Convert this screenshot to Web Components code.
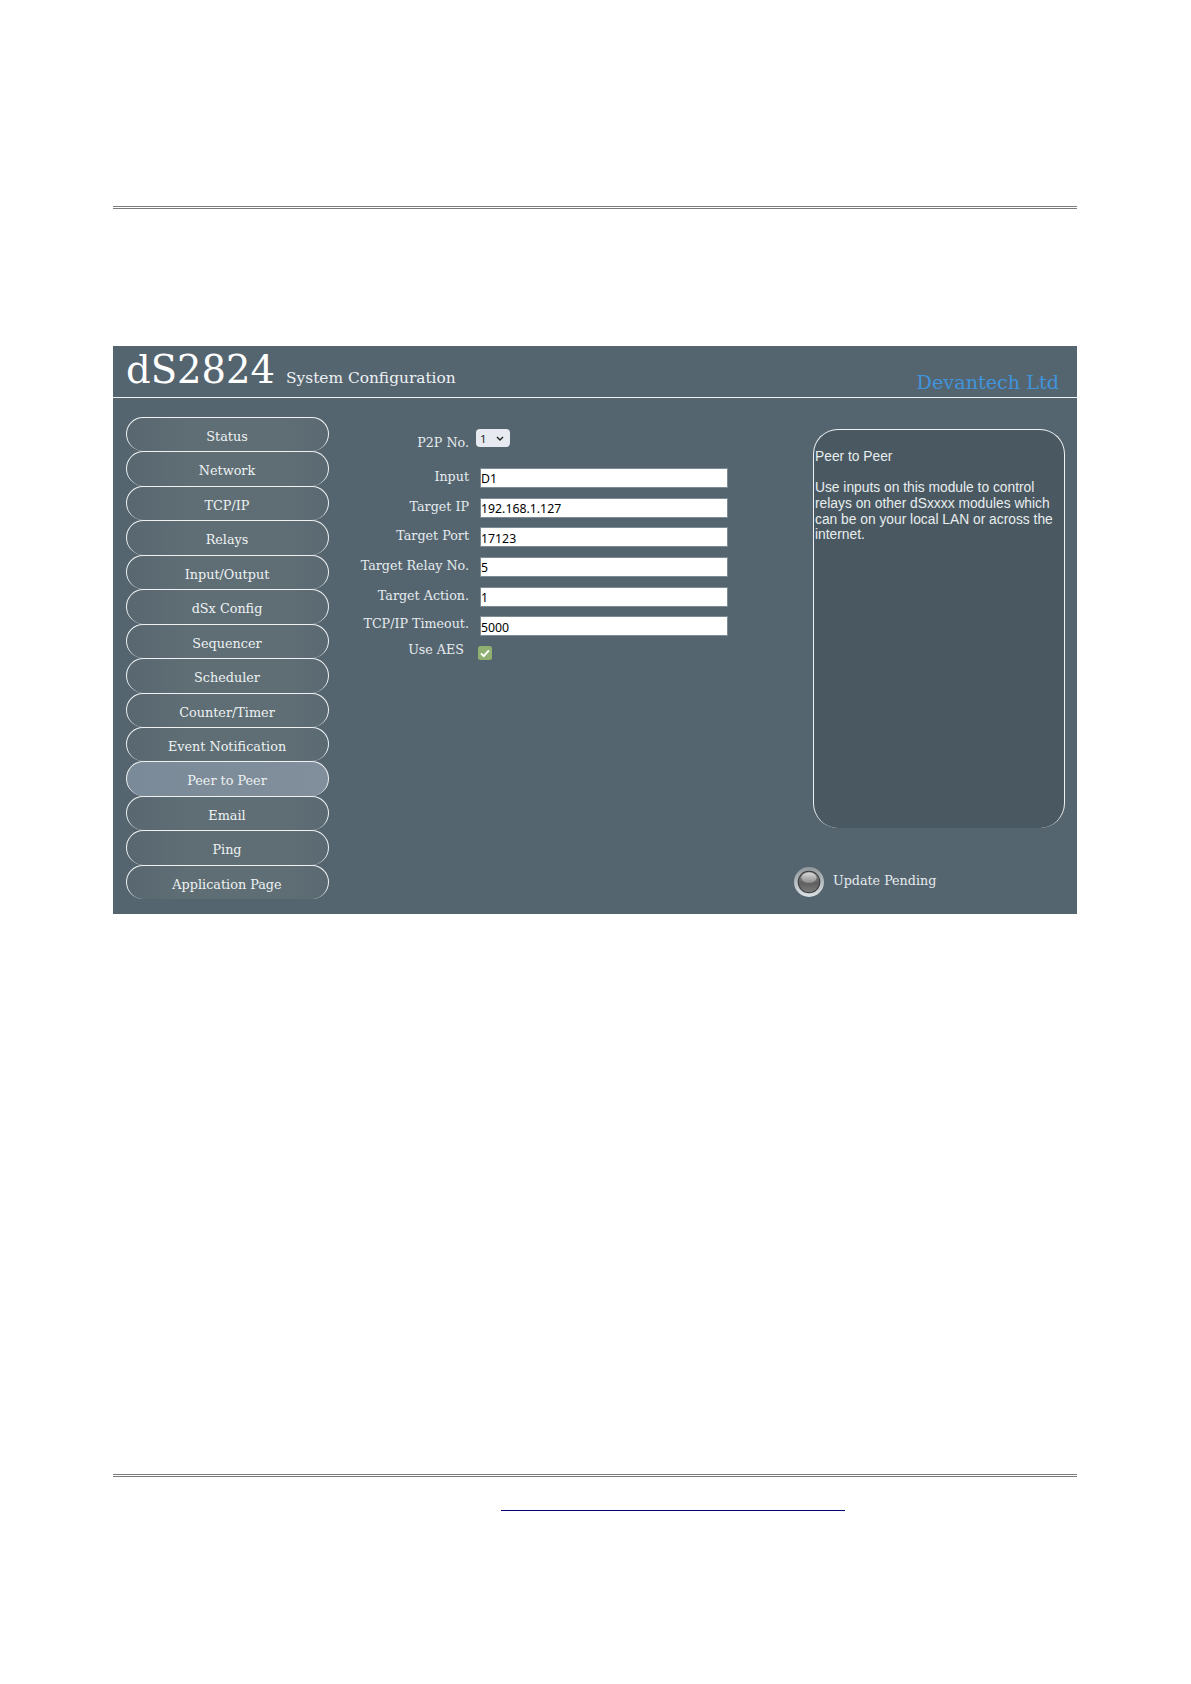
<!DOCTYPE html>
<html>
<head>
<meta charset="utf-8">
<title>dS2824</title>
<style>
  body { margin: 0; background: #fff; font-family: "DejaVu Serif", serif; }
</style>
</head>
<body>
<ds-page>
  <ds-panel title-text="dS2824" sub="System Configuration" maker="Devantech Ltd">
    <ds-nav slot="nav">
      <ds-nav-button>Status</ds-nav-button>
      <ds-nav-button>Network</ds-nav-button>
      <ds-nav-button>TCP/IP</ds-nav-button>
      <ds-nav-button>Relays</ds-nav-button>
      <ds-nav-button>Input/Output</ds-nav-button>
      <ds-nav-button>dSx Config</ds-nav-button>
      <ds-nav-button>Sequencer</ds-nav-button>
      <ds-nav-button>Scheduler</ds-nav-button>
      <ds-nav-button>Counter/Timer</ds-nav-button>
      <ds-nav-button>Event Notification</ds-nav-button>
      <ds-nav-button active>Peer to Peer</ds-nav-button>
      <ds-nav-button>Email</ds-nav-button>
      <ds-nav-button>Ping</ds-nav-button>
      <ds-nav-button>Application Page</ds-nav-button>
    </ds-nav>
    <ds-p2p-form slot="form"></ds-p2p-form>
    <ds-help-box slot="help">
      Peer to Peer<br><br>
      Use inputs on this module to control relays on other dSxxxx modules which can be on your local LAN or across the internet.
    </ds-help-box>
    <ds-led slot="status">Update Pending</ds-led>
  </ds-panel>
</ds-page>

<script>
function shadow(el, html) {
  el.attachShadow({ mode: "open" }).innerHTML = html;
}

class DsPage extends HTMLElement {
  constructor() {
    super();
    shadow(this, `
      <style>
        :host { display: block; width: 964px; margin-left: 113px; padding-top: 206px; }
        .rule { height: 1px; background: #fff; border-top: 1px solid #7c7c7c; border-bottom: 1px solid #7c7c7c; }
        .gap1 { height: 137px; }
        .gap2 { height: 560px; }
        a { display: block; width: 344px; height: 1px; margin: 33px 0 0 388px; background: #00006e; }
      </style>
      <div class="rule"></div>
      <div class="gap1"></div>
      <slot></slot>
      <div class="gap2"></div>
      <div class="rule"></div>
      <a href="#"></a>`);
  }
}

class DsPanel extends HTMLElement {
  constructor() {
    super();
    shadow(this, `
      <style>
        :host { display: block; height: 568px; background: #556570; color: #eef2f3; }
        header { display: flex; height: 51px; border-bottom: 1px solid #f2f5f6; padding: 0 18px 0 13px; align-items: baseline; }
        h1 { margin: 0; font-weight: normal; font-size: 38.5px; line-height: 47px; color: #fff; }
        .sub { margin-left: 11px; font-size: 15.4px; }
        .maker { margin-left: auto; font-size: 19.2px; color: #3f94dc; transform: translateY(6px); }
        .body { display: flex; padding: 19px 0 0 13px; }
        .right { display: flex; flex-direction: column; margin-left: auto; padding-top: 12px; width: 283px; }
      </style>
      <header>
        <h1></h1><span class="sub"></span><span class="maker"></span>
      </header>
      <div class="body">
        <slot name="nav"></slot>
        <slot name="form"></slot>
        <div class="right">
          <slot name="help"></slot>
          <slot name="status"></slot>
        </div>
      </div>`);
    this.shadowRoot.querySelector("h1").textContent = this.getAttribute("title-text");
    this.shadowRoot.querySelector(".sub").textContent = this.getAttribute("sub");
    this.shadowRoot.querySelector(".maker").textContent = this.getAttribute("maker");
  }
}

class DsNav extends HTMLElement {
  constructor() {
    super();
    shadow(this, `
      <style>:host { display: flex; flex-direction: column; width: 203px; flex: none; }</style>
      <slot></slot>`);
  }
}

class DsNavButton extends HTMLElement {
  constructor() {
    super();
    shadow(this, `
      <style>
        :host { display: block; height: 34.45px; flex: none; box-sizing: border-box; padding: 10px 1px 0 0; text-align: center;
          font-size: 12.8px; line-height: 18px; color: #eef2f3;
          border: 1px solid #eef2f3; border-bottom: 0; border-radius: 20px;
          background: linear-gradient(90deg, #596870, #5f6e75 30%, #5f6e75 80%, #5b6a72); }
        :host([active]) { background: linear-gradient(90deg, #7b8a98, #818f9c); }
      </style>
      <slot></slot>`);
  }
}

class DsFormRow extends HTMLElement {
  constructor() {
    super();
    const lift = this.getAttribute("lift") || 0;
    const text = this.getAttribute("label");
    shadow(this, `
      <style>
        :host { display: grid; grid-template-columns: 140px 1fr; column-gap: 12px; height: 29.7px; align-items: center;
          font-size: 12.7px; }
        label { text-align: right; white-space: nowrap; color: #e6ecee; margin-top: ${-2 * lift}px; }
        div { display: flex; align-items: center; height: 100%; }
      </style>
      <label>${text}</label>
      <div><slot></slot></div>`);
  }
}

class DsP2pForm extends HTMLElement {
  constructor() {
    super();
    const rows = [
      ["Input", "D1", 1],
      ["Target IP", "192.168.1.127", 1],
      ["Target Port", "17123", 1.5],
      ["Target Relay No.", "5", 1.5],
      ["Target Action.", "1", 1],
      ["TCP/IP Timeout.", "5000", 2.5]
    ];
    const chevron = "data:image/svg+xml," + encodeURIComponent(
      '<svg xmlns="http://www.w3.org/2000/svg" width="8" height="5"><path d="M1 1l3 3 3-3" fill="none" stroke="#222" stroke-width="1.4"/></svg>');
    shadow(this, `
      <style>
        :host { display: block; width: 398px; flex: none; padding-top: 3px; }
        .top { display: grid; grid-template-columns: 140px auto; column-gap: 7px; justify-content: start; height: 43px; font-size: 12.7px; }
        .top label { text-align: right; color: #e6ecee; padding-top: 15px; }
        select { appearance: none; width: 34px; height: 18px; margin-top: 9px; padding: 0 0 0 4px; border: 0; border-radius: 4px;
          background: #e8eaf2 url("${chevron}") no-repeat 20px 7px; font: 11.5px "Noto Sans", sans-serif; color: #222; }
        input[type=text] { width: 246px; height: 18px; box-sizing: border-box; border: 0; padding: 2px 0 0 0; background: #fff; font: 12.3px "Noto Sans", sans-serif; color: #000; outline: 1px solid #7f8b92; }
        .aes { display: grid; grid-template-columns: 135px auto; column-gap: 14px; height: 26px; font-size: 12.7px; }
        .aes label { text-align: right; color: #e6ecee; padding-top: 1px; }
        .check { display: block; margin-top: 4.5px; }
      </style>
      <div class="top"><label>P2P No.</label><select><option>1</option></select></div>
      ${rows.map(r => `<ds-form-row label="${r[0]}" lift="${r[2]}"><input type="text" value="${r[1]}"></ds-form-row>`).join("")}
      <div class="aes"><label>Use AES</label>
        <svg class="check" width="14" height="14" viewBox="0 0 14 14"><rect width="14" height="14" rx="2.5" fill="#8fb070"/><path d="M3 7.4l2.7 2.7L11 4.4" fill="none" stroke="#fff" stroke-width="2"/></svg>
      </div>`);
  }
}

class DsHelpBox extends HTMLElement {
  constructor() {
    super();
    shadow(this, `
      <style>
        :host { display: block; width: 252px; height: 399px; box-sizing: border-box; margin-left: 19px; padding: 18.5px 8px 0 1px;
          border: 1px solid #eef2f3; border-bottom: 0; border-radius: 25px;
          background: #4a5961; color: #e8edef; font: 13.8px/15.8px "Liberation Sans", sans-serif; }
      </style>
      <slot></slot>`);
  }
}

class DsLed extends HTMLElement {
  constructor() {
    super();
    shadow(this, `
      <style>
        :host { display: flex; align-items: center; gap: 9px; margin-top: 39px; font-size: 12.7px; color: #e6ecee; }
        svg { flex: none; }
        span { margin-top: -3px; }
      </style>
      <svg width="30" height="30" viewBox="0 0 30 30">
        <defs>
          <linearGradient id="ring" x1="0" y1="0" x2="0" y2="1">
            <stop offset="0" stop-color="#8f979b"/><stop offset="1" stop-color="#dce1e4"/>
          </linearGradient>
          <linearGradient id="lamp" x1="0" y1="0" x2="0" y2="1">
            <stop offset="0" stop-color="#9a9a9a"/><stop offset=".55" stop-color="#5f5f5f"/><stop offset="1" stop-color="#7a7a7a"/>
          </linearGradient>
          <linearGradient id="shine" x1="0" y1="0" x2="0" y2="1">
            <stop offset="0" stop-color="#d8d8d8"/><stop offset="1" stop-color="#8a8a8a"/>
          </linearGradient>
        </defs>
        <circle cx="15" cy="15" r="15" fill="url(#ring)"/>
        <circle cx="15" cy="15" r="11.3" fill="#3a3c3d"/>
        <circle cx="15" cy="15" r="10.3" fill="url(#lamp)"/>
        <ellipse cx="15" cy="10.8" rx="7.5" ry="5.3" fill="url(#shine)"/>
      </svg>
      <span><slot></slot></span>`);
  }
}

customElements.define("ds-page", DsPage);
customElements.define("ds-panel", DsPanel);
customElements.define("ds-nav", DsNav);
customElements.define("ds-nav-button", DsNavButton);
customElements.define("ds-form-row", DsFormRow);
customElements.define("ds-p2p-form", DsP2pForm);
customElements.define("ds-help-box", DsHelpBox);
customElements.define("ds-led", DsLed);
</script>
</body>
</html>
